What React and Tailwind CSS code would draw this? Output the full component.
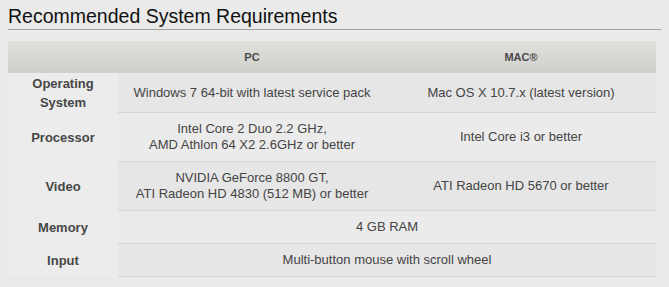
const ROWS = [
  { label: ['Operating', 'System'], pc: ['Windows 7 64-bit with latest service pack'], mac: ['Mac OS X 10.7.x (latest version)'] },
  { label: ['Processor'], pc: ['Intel Core 2 Duo 2.2 GHz,', 'AMD Athlon 64 X2 2.6GHz or better'], mac: ['Intel Core i3 or better'] },
  { label: ['Video'], pc: ['NVIDIA GeForce 8800 GT,', 'ATI Radeon HD 4830 (512 MB) or better'], mac: ['ATI Radeon HD 5670 or better'] },
  { label: ['Memory'], both: '4 GB RAM' },
  { label: ['Input'], both: 'Multi-button mouse with scroll wheel' },
]

function Lines({ lines }) {
  return lines.map((l, i) => <div key={i}>{l}</div>)
}

export default function App() {
  return (
    <div className="min-h-[287px] bg-[#eaeaea] font-['Liberation_Sans',Arial,sans-serif] text-[#444]">
      {/* Title */}
      <h2 className="mx-2 pt-[5px] pb-px text-[19.5px] leading-[23px] text-[#111] border-b border-[#a3a3a3]">
        Recommended System Requirements
      </h2>

      <table className="ml-2 mt-[11px] w-[648px] table-fixed border-separate border-spacing-0 text-[13px]">
        <colgroup>
          <col className="w-[110px]" />
          <col className="w-[268px]" />
          <col className="w-[270px]" />
        </colgroup>
        <thead>
          <tr className="h-8 bg-linear-to-b from-[#e0e0dc] to-[#cfcfcc] text-[11px] font-bold text-[#4a4a4a]">
            <th></th>
            <th className="text-center align-middle">PC</th>
            <th className="text-center align-middle">MAC®</th>
          </tr>
        </thead>
        <tbody>
          {ROWS.map((r, i) => {
            const cell = `py-2 leading-4 text-center align-middle border-b border-[#d4d4d4] ${i % 2 === 0 ? 'bg-[#e6e6e6]' : 'bg-[#ebebeb]'}`
            return (
              <tr key={i}>
                <td className="py-px text-center align-middle font-bold leading-[19px] bg-[#ececec] text-[#474747]">
                  <Lines lines={r.label} />
                </td>
                {r.both ? (
                  <td colSpan={2} className={cell}>{r.both}</td>
                ) : (
                  <>
                    <td className={cell}><Lines lines={r.pc} /></td>
                    <td className={cell}><Lines lines={r.mac} /></td>
                  </>
                )}
              </tr>
            )
          })}
        </tbody>
      </table>
    </div>
  )
}
